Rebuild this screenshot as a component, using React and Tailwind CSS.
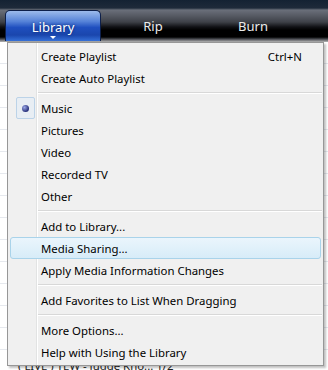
import React from "react"

const ITEMS = [
  { label: "Create Playlist", shortcut: "Ctrl+N" },
  { label: "Create Auto Playlist" },
  { sep: true },
  { label: "Music", checked: true },
  { label: "Pictures" },
  { label: "Video" },
  { label: "Recorded TV" },
  { label: "Other" },
  { sep: true },
  { label: "Add to Library..." },
  { label: "Media Sharing...", hover: true },
  { label: "Apply Media Information Changes" },
  { sep: true },
  { label: "Add Favorites to List When Dragging" },
  { sep: true },
  { label: "More Options..." },
  { label: "Help with Using the Library" },
]

function Tab({ label, active }) {
  if (active) {
    return (
      <div className="flex w-[100px] justify-center pt-[10px]">
        <div className="relative flex h-[31px] w-[96px] items-start justify-center rounded-t-[5px] border border-b-0 border-[#0d1f4a] bg-[linear-gradient(to_bottom,#9cbbec_0%,#5582d8_35%,#1f4fbf_55%,#1a46ad_80%,#3570d8_100%)] pt-[7px] text-[13px] text-white [text-shadow:0_0_3px_#0a2460]">
          {label}
          <span className="absolute bottom-[2px] left-1/2 h-0 w-0 -translate-x-1/2 border-x-[3px] border-t-[3px] border-x-transparent border-t-white" />
        </div>
      </div>
    )
  }
  return (
    <div className="flex w-[100px] justify-center pt-[17px] text-[13px] text-[#ececec]">
      {label}
    </div>
  )
}

function MenuItem({ item }) {
  if (item.sep) {
    return (
      <div className="flex h-[8px] items-center pl-[30px] pr-[1px]">
        <div className="h-[2px] flex-1 border-t border-b border-t-[#d8d8d8] border-b-white" />
      </div>
    )
  }
  return (
    <div
      className={`relative mx-[2px] flex h-[22px] items-center rounded-[3px] border ${
        item.hover
          ? "border-[#a9d3ea] bg-[linear-gradient(to_bottom,#eaf5fc,#d7ecf8)]"
          : "border-transparent"
      }`}
    >
      <div className="flex w-[29px] shrink-0 items-center justify-center">
        {item.checked && (
          <div className="flex h-[22px] w-[19px] items-center justify-center rounded-[2px] border border-[#bcd3e8] bg-[#e8eef4]">
            <span className="h-[7px] w-[7px] rounded-full bg-[radial-gradient(circle_at_35%_35%,#9aa8e8,#28307a_70%)]" />
          </div>
        )}
      </div>
      <span className="pl-[1px] pt-[2px]">{item.label}</span>
      {item.shortcut && <span className="ml-auto pr-[18px] pt-[2px]">{item.shortcut}</span>}
    </div>
  )
}

export default function App() {
  return (
    <div className="relative h-[370px] w-[328px] overflow-hidden bg-white font-['Noto_Sans',sans-serif] text-[11.4px] text-black">
      {/* Top toolbar */}
      <div className="flex h-[42px] bg-[linear-gradient(to_bottom,#142233_0px,#1e2a3a_8px,#6a6f7a_10px,#555962_16px,#3e4148_22px,#101114_27px,#000_30px,#000_37px,#45474d_39px,#b5b5b5_42px)] pl-[3px]">
        <Tab label="Library" active />
        <Tab label="Rip" />
        <Tab label="Burn" />
      </div>

      {/* Underlying list */}
      <div className="flex flex-col">
        {Array.from({ length: 14 }).map((_, i) => (
          <div key={i} className="h-[22px] border-b border-[#e6e9ee]" />
        ))}
        <div className="pl-[18px] pt-[7px] text-[#222]">( LIVE ) TEW - Judge Kno...   1/2</div>
      </div>

      {/* Dropdown menu */}
      <div className="absolute left-[7px] top-[42px] w-[317px] border border-[#979797] bg-[#f0f0f0] py-[2px] shadow-[2px_2px_2px_rgba(0,0,0,0.25)]">
        <div className="absolute bottom-0 left-[28px] top-0 w-[2px] border-l border-r border-l-[#e2e3e3] border-r-white" />
        {ITEMS.map((item, i) => (
          <MenuItem key={i} item={item} />
        ))}
      </div>
    </div>
  )
}
